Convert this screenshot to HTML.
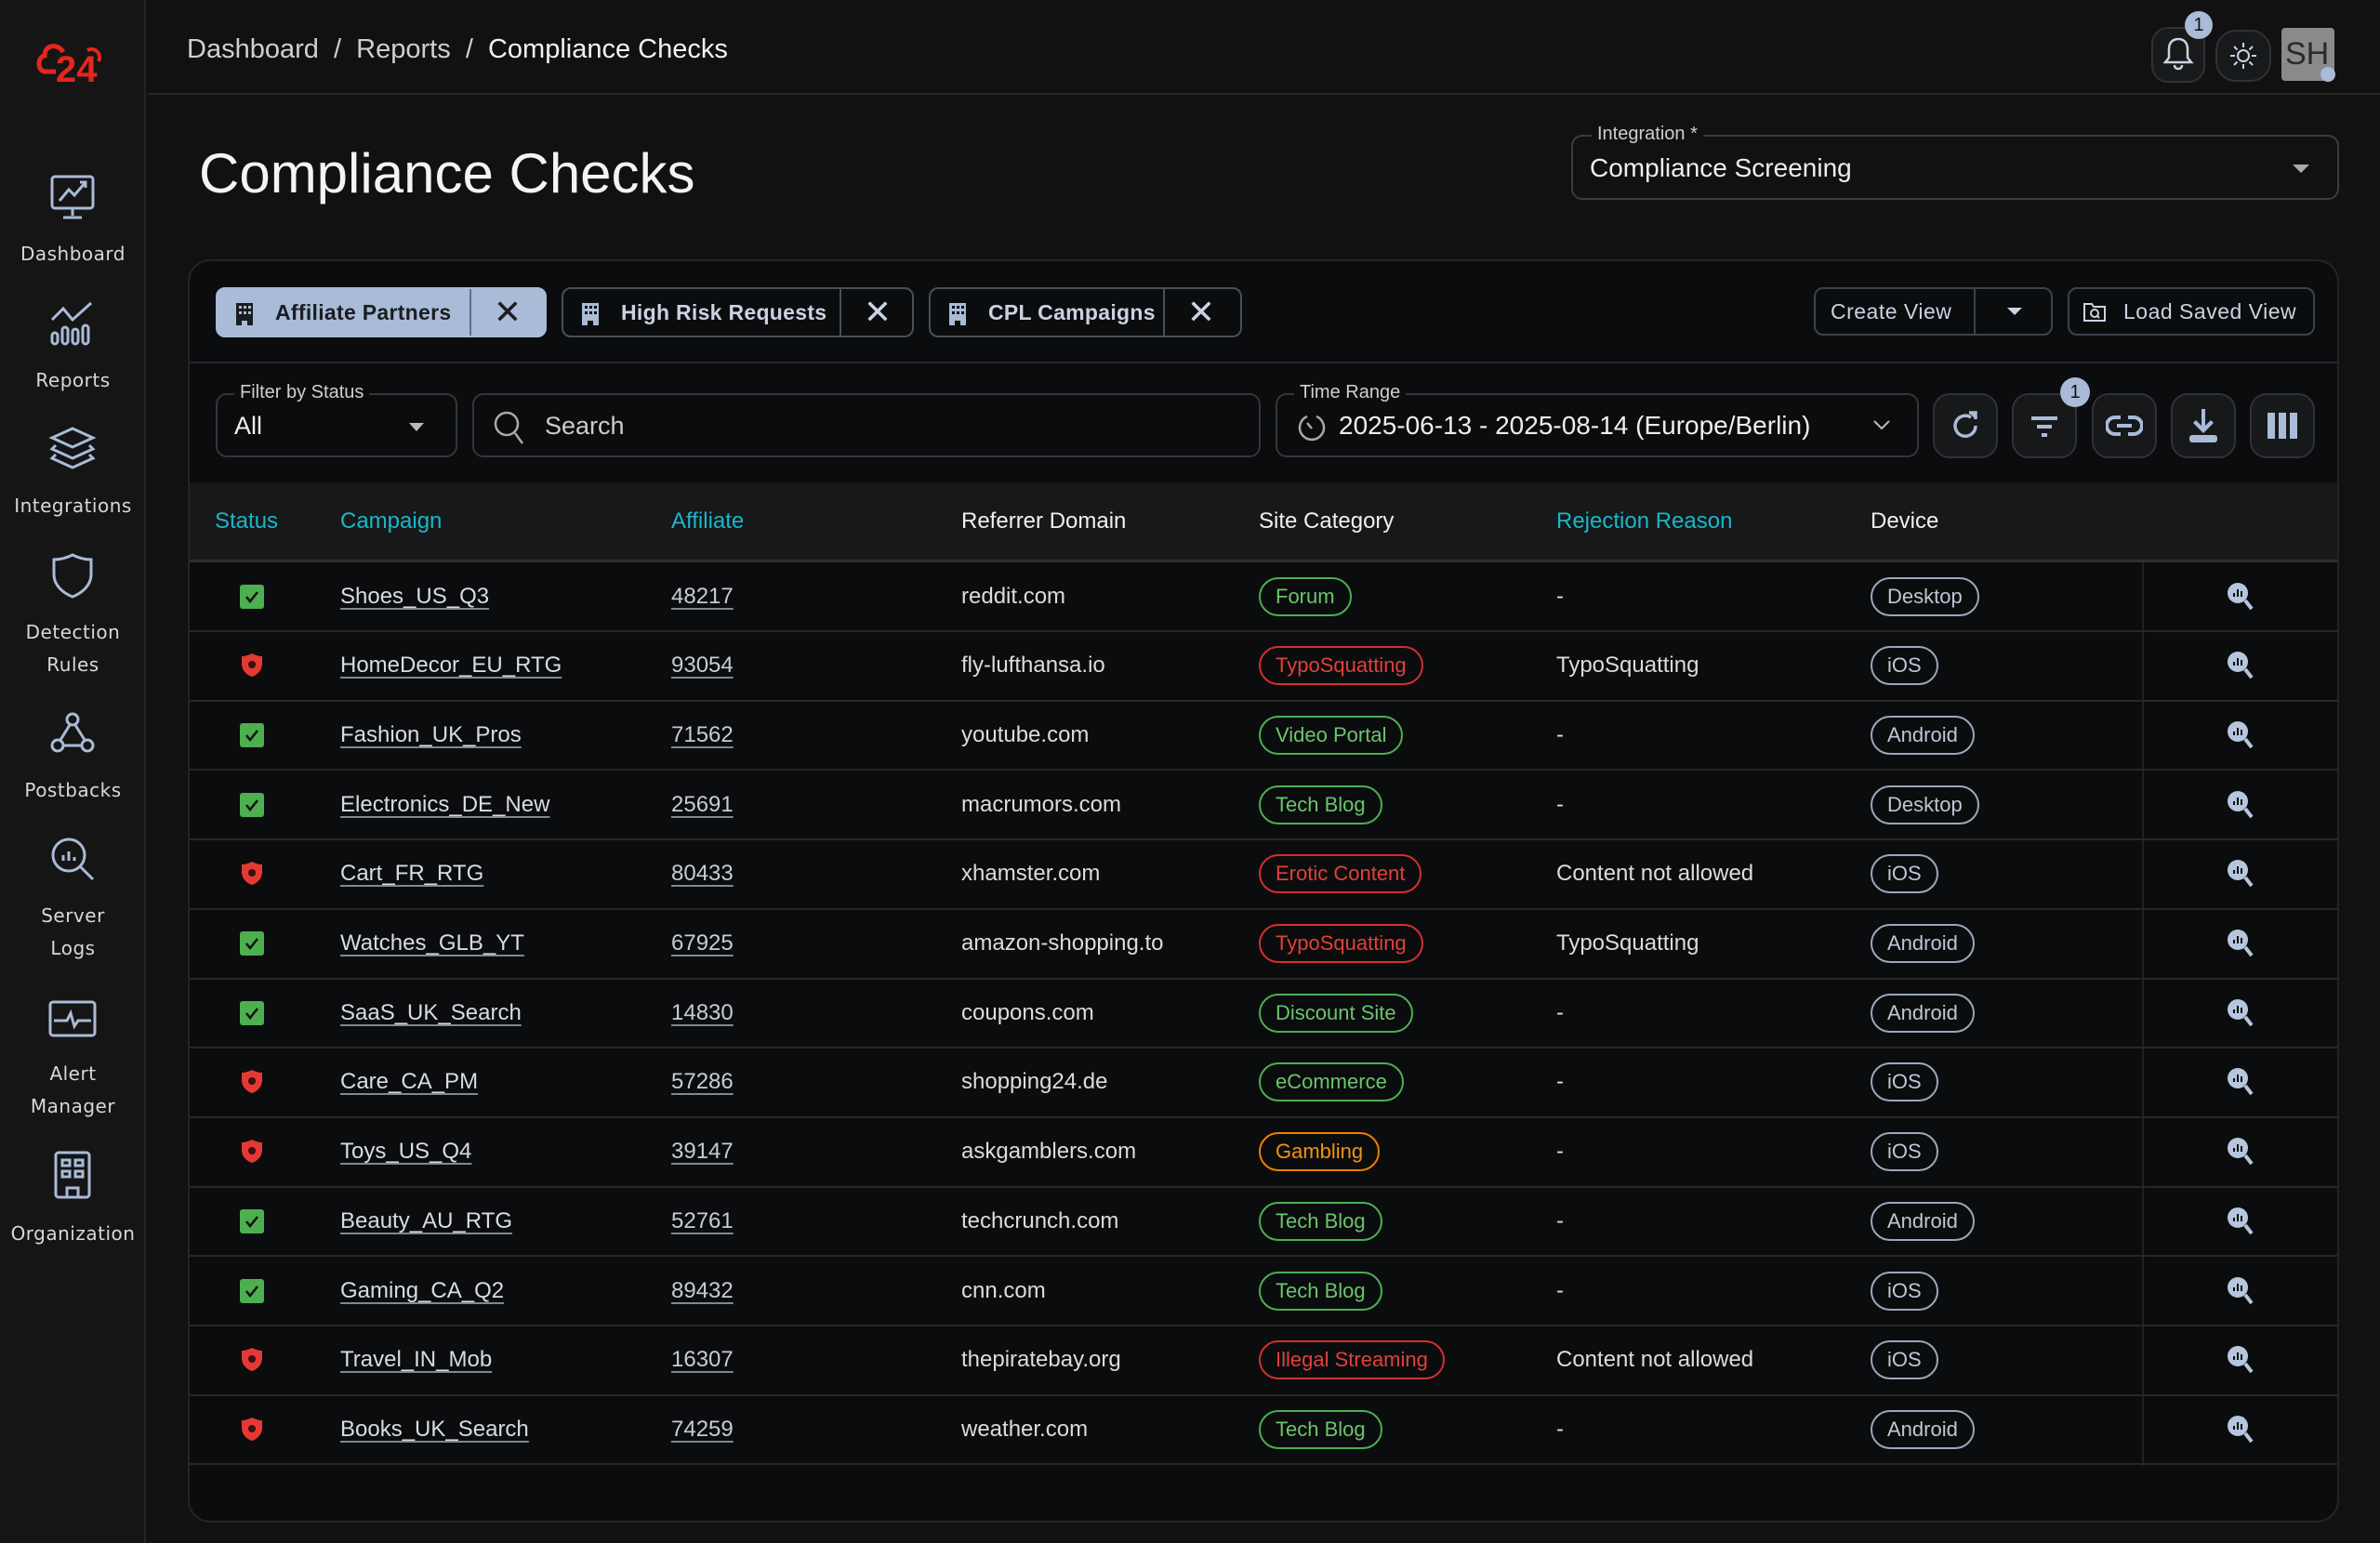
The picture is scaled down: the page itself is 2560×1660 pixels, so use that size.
<!DOCTYPE html>
<html><head><meta charset="utf-8"><style>
*{box-sizing:border-box;margin:0;padding:0}
body{width:2560px;height:1660px;background:#111112;font-family:"Liberation Sans",sans-serif;color:#e6e6e6;position:relative;overflow:hidden}
.abs{position:absolute}
#side{left:0;top:0;width:157px;height:1660px;background:#151515;border-right:2px solid #232323}
.nl{position:absolute;left:0;width:157px;text-align:center;font-family:"DejaVu Sans",sans-serif;font-size:20px;color:#d8d8d8;line-height:35px;letter-spacing:0.5px}
.ni{position:absolute;left:50px;width:56px;height:56px}
#hdr{left:159px;top:0;right:0;height:102px;border-bottom:2px solid #262626}
.bc{left:201px;top:37px;font-size:29px;color:#cfcfcf}
h1{position:absolute;left:214px;top:152px;font-size:60px;font-weight:normal;color:#f4f4f4}
.fld{position:absolute;border:2px solid #3a3c3f;border-radius:12px}
.lbl{position:absolute;top:-14px;background:#111112;padding:0 6px;font-size:20px;color:#cfcfcf}
#card{left:202px;top:279px;width:2314px;height:1359px;background:#0b0c0d;border:2px solid #222426;border-radius:24px;overflow:hidden}
.chip{position:absolute;top:28px;height:54px;border:2px solid #4a5058;border-radius:10px;font-size:23px;color:#c9d3e2;display:flex;align-items:center;font-weight:bold}
.chip .t{padding-left:62px;letter-spacing:0.3px}
.chip .x{position:absolute;top:0;bottom:0;border-left:2px solid #4a5058;width:80px;display:flex;align-items:center;justify-content:center;font-size:36px;font-weight:normal}
.btn{position:absolute;top:28px;height:52px;border:2px solid #3d434b;border-radius:10px;font-size:23px;color:#c9d3e2;display:flex;align-items:center;letter-spacing:0.5px}
.ib{position:absolute;top:142px;width:70px;height:70px;border:2px solid #2f3236;border-radius:18px;background:#16181a;display:flex;align-items:center;justify-content:center}
#th{position:absolute;left:0;top:238px;width:2314px;height:86px;background:#161819;border-bottom:3px solid #2e3032}
.h{position:absolute;top:28px;font-size:24px;color:#f0f0f0}
.h.c{color:#1ab7c9}
.row{position:absolute;left:0;width:2314px;height:75px;border-bottom:2px solid #26282a;font-size:24px;color:#dcdcdc}
.row>div{position:absolute;top:0;height:73px;display:flex;align-items:center}
.st{left:54px;width:26px}
.cp{left:162px;text-decoration:underline;text-underline-offset:5px;text-decoration-color:#7f8894;color:#d8dce2}
.af{left:518px;text-decoration:underline;text-underline-offset:5px;text-decoration-color:#7f8894;color:#c8ccd2}
.rf{left:830px}
.sc{left:1150px}
.rj{left:1470px}
.dv{left:1808px}
.ac{left:2191px;width:30px}
.vd{position:absolute;left:2100px;top:0;bottom:0;width:2px;background:#1f2123}
.b{height:42px;border:2px solid;border-radius:21px;padding:0 16px;font-size:22px;display:flex;align-items:center}
.g{border-color:#4caf50;color:#6cc46c}
.r{border-color:#d32f2f;color:#e2403a}
.o{border-color:#f57c00;color:#f5920f}
.d{border-color:#9aa8bd;color:#bdc7d6}
</style></head><body>

<div id="side" class="abs">
  <svg class="abs" style="left:38px;top:44px" width="80" height="50" viewBox="0 0 80 50"><path d="M30 12 C24 2 10 4 10 16 C2 17 2 32 10 33 L22 33" fill="none" stroke="#e3261f" stroke-width="5"/><path d="M56 10 C64 6 72 14 68 22" fill="none" stroke="#e3261f" stroke-width="4"/><text x="22" y="44" font-family="Liberation Sans" font-weight="bold" font-size="40" fill="#e3261f">24</text></svg>
  <svg class="ni" style="top:184px" viewBox="0 0 56 56" fill="none" stroke="#a9bbd6" stroke-width="3"><rect x="6" y="6" width="44" height="34" rx="3"/><path d="M14 32l10-12 6 6 12-14M36 12h6v6M28 40v8M18 50h20"/></svg>
  <div class="nl" style="top:256px">Dashboard</div>
  <svg class="ni" style="top:320px" viewBox="0 0 56 56" fill="none" stroke="#a9bbd6" stroke-width="3"><path d="M6 24L18 12l10 12 20-18"/><rect x="6" y="38" width="6" height="12" rx="3"/><rect x="17" y="32" width="6" height="18" rx="3"/><rect x="28" y="34" width="6" height="16" rx="3"/><rect x="39" y="30" width="6" height="20" rx="3"/></svg>
  <div class="nl" style="top:392px">Reports</div>
  <svg class="ni" style="top:455px" viewBox="0 0 56 56" fill="none" stroke="#a9bbd6" stroke-width="3"><path d="M28 6l22 10-22 10L6 16z"/><path d="M10 24l-4 4 22 10 22-10-4-4"/><path d="M10 34l-4 4 22 10 22-10-4-4"/></svg>
  <div class="nl" style="top:527px">Integrations</div>
  <svg class="ni" style="top:591px" viewBox="0 0 56 56" fill="none" stroke="#a9bbd6" stroke-width="3"><path d="M28 6C20 10 14 11 8 11v16c0 12 10 20 20 24 10-4 20-12 20-24V11c-6 0-12-1-20-5z"/></svg>
  <div class="nl" style="top:663px">Detection<br>Rules</div>
  <svg class="ni" style="top:762px" viewBox="0 0 56 56" fill="none" stroke="#a9bbd6" stroke-width="3"><circle cx="28" cy="12" r="6"/><circle cx="12" cy="40" r="6"/><circle cx="44" cy="40" r="6"/><path d="M25 18l-10 16M31 18l10 16M18 40h20"/></svg>
  <div class="nl" style="top:833px">Postbacks</div>
  <svg class="ni" style="top:896px" viewBox="0 0 56 56" fill="none" stroke="#a9bbd6" stroke-width="3"><circle cx="24" cy="24" r="17"/><path d="M36 36l14 14M18 30v-6M24 30v-10M30 30v-4"/></svg>
  <div class="nl" style="top:968px">Server<br>Logs</div>
  <svg class="ni" style="top:1068px" viewBox="0 0 56 56" fill="none" stroke="#a9bbd6" stroke-width="3"><rect x="4" y="10" width="48" height="36" rx="3"/><path d="M8 30h14l4-8 4 14 4-6h14"/></svg>
  <div class="nl" style="top:1138px">Alert<br>Manager</div>
  <svg class="ni" style="top:1236px" viewBox="0 0 56 56" fill="none" stroke="#a9bbd6" stroke-width="3"><rect x="10" y="4" width="36" height="48" rx="3"/><rect x="17" y="12" width="8" height="6"/><rect x="31" y="12" width="8" height="6"/><rect x="17" y="24" width="8" height="6"/><rect x="31" y="24" width="8" height="6"/><path d="M22 52V42h12v10"/></svg>
  <div class="nl" style="top:1310px">Organization</div>
</div>

<div id="hdr" class="abs"></div>
<div class="abs bc">Dashboard&nbsp;&nbsp;/&nbsp;&nbsp;Reports&nbsp;&nbsp;/&nbsp;&nbsp;<span style="color:#f2f2f2">Compliance Checks</span></div>
<div class="abs" style="left:2314px;top:29px;width:58px;height:60px;border:2px solid #2f3236;border-radius:18px;background:#17191b"></div>
<svg class="abs" style="left:2325px;top:38px" width="36" height="40" viewBox="0 0 36 40" fill="none" stroke="#c9d3e2" stroke-width="2.5"><path d="M18 4c-7 0-10 5-10 11v9l-4 5h28l-4-5v-9c0-6-3-11-10-11zM14 32c0 3 2 4 4 4s4-1 4-4"/></svg>
<div class="abs" style="left:2350px;top:12px;width:30px;height:30px;border-radius:15px;background:#a9bbd6;color:#111;font-size:20px;text-align:center;line-height:30px">1</div>
<div class="abs" style="left:2383px;top:32px;width:60px;height:56px;border:2px solid #2f3236;border-radius:22px;background:#17191b"></div>
<svg class="abs" style="left:2397px;top:44px" width="32" height="32" viewBox="0 0 32 32" fill="none" stroke="#c9d3e2" stroke-width="2"><circle cx="16" cy="16" r="6"/><path d="M16 2v5M16 25v5M2 16h5M25 16h5M6 6l3.5 3.5M22.5 22.5L26 26M6 26l3.5-3.5M22.5 9.5L26 6"/></svg>
<div class="abs" style="left:2454px;top:30px;width:57px;height:57px;background:#8a8a8a;border-radius:4px;color:#2a2a2a;font-size:34px;line-height:57px;padding-left:4px">SH</div>
<div class="abs" style="left:2496px;top:72px;width:16px;height:16px;border-radius:8px;background:#a9bbd6"></div>

<h1>Compliance Checks</h1>
<div class="fld" style="left:1690px;top:145px;width:826px;height:70px">
  <div class="lbl" style="left:20px">Integration *</div>
  <div class="abs" style="left:18px;top:18px;font-size:28px;color:#eee">Compliance Screening</div>
  <div class="abs" style="right:30px;top:30px;width:0;height:0;border-left:9px solid transparent;border-right:9px solid transparent;border-top:9px solid #aaa"></div>
</div>

<div id="card" class="abs">
  <div class="chip" style="left:28px;width:356px;background:#a9bbd6;border-color:#a9bbd6;color:#1a1d22">
    <svg class="abs" style="left:18px;top:13px" width="22" height="28" viewBox="0 0 22 28"><path d="M2 2h18v24h-6v-5h-6v5H2z" fill="#1a1d22"/><g fill="#a9bbd6"><rect x="5" y="5" width="3" height="3"/><rect x="10" y="5" width="3" height="3"/><rect x="15" y="5" width="3" height="3"/><rect x="5" y="11" width="3" height="3"/><rect x="10" y="11" width="3" height="3"/><rect x="15" y="11" width="3" height="3"/></g></svg>
    <span class="t">Affiliate Partners</span><div class="x" style="left:271px;border-color:#5d6f8c;color:#1a1d22">✕</div></div>
  <div class="chip" style="left:400px;width:379px">
    <svg class="abs" style="left:18px;top:13px" width="22" height="28" viewBox="0 0 22 28"><path d="M2 2h18v24h-6v-5h-6v5H2z" fill="#a9bbd6"/><g fill="#0b0c0d"><rect x="5" y="5" width="3" height="3"/><rect x="10" y="5" width="3" height="3"/><rect x="15" y="5" width="3" height="3"/><rect x="5" y="11" width="3" height="3"/><rect x="10" y="11" width="3" height="3"/><rect x="15" y="11" width="3" height="3"/></g></svg>
    <span class="t">High Risk Requests</span><div class="x" style="left:297px;color:#c9d3e2">✕</div></div>
  <div class="chip" style="left:795px;width:337px">
    <svg class="abs" style="left:18px;top:13px" width="22" height="28" viewBox="0 0 22 28"><path d="M2 2h18v24h-6v-5h-6v5H2z" fill="#a9bbd6"/><g fill="#0b0c0d"><rect x="5" y="5" width="3" height="3"/><rect x="10" y="5" width="3" height="3"/><rect x="15" y="5" width="3" height="3"/><rect x="5" y="11" width="3" height="3"/><rect x="10" y="11" width="3" height="3"/><rect x="15" y="11" width="3" height="3"/></g></svg>
    <span class="t">CPL Campaigns</span><div class="x" style="left:250px;color:#c9d3e2">✕</div></div>

  <div class="btn" style="left:1747px;width:257px"><span style="padding-left:16px">Create View</span>
    <div class="abs" style="left:170px;top:0;bottom:0;border-left:2px solid #3d434b;width:85px"><div class="abs" style="left:34px;top:20px;border-left:8px solid transparent;border-right:8px solid transparent;border-top:8px solid #c9d3e2"></div></div></div>
  <div class="btn" style="left:2020px;width:266px">
    <svg class="abs" style="left:14px;top:12px" width="26" height="24" viewBox="0 0 26 24" fill="none" stroke="#c9d3e2" stroke-width="2"><path d="M2 4h8l2 3h12v15H2z"/><circle cx="13" cy="14" r="4"/><path d="M16 17l2 2"/></svg>
    <span style="padding-left:58px">Load Saved View</span></div>

  <div class="abs" style="left:0;top:108px;width:2314px;height:2px;background:#242628"></div>

  <div class="fld" style="left:28px;top:142px;width:260px;height:69px;border-color:#34363a">
    <div class="lbl" style="left:18px;background:#0b0c0d">Filter by Status</div>
    <div class="abs" style="left:18px;top:18px;font-size:27px;color:#eee">All</div>
    <div class="abs" style="left:206px;top:30px;border-left:8px solid transparent;border-right:8px solid transparent;border-top:9px solid #bbb"></div>
  </div>
  <div class="fld" style="left:304px;top:142px;width:848px;height:69px;border-color:#34363a">
    <svg class="abs" style="left:20px;top:16px" width="38" height="40" viewBox="0 0 38 40" fill="none" stroke="#aaa" stroke-width="2.5"><circle cx="15" cy="15" r="12"/><path d="M24 25l8 11"/></svg>
    <div class="abs" style="left:76px;top:18px;font-size:27px;color:#ccc">Search</div>
  </div>
  <div class="fld" style="left:1168px;top:142px;width:692px;height:69px;border-color:#34363a">
    <div class="lbl" style="left:18px;background:#0b0c0d">Time Range</div>
    <svg class="abs" style="left:20px;top:18px" width="34" height="34" viewBox="0 0 34 34" fill="none" stroke="#aaa" stroke-width="2.5"><path d="M12 5A13 13 0 1 0 22 5"/><path d="M12 12l5 6"/></svg>
    <div class="abs" style="left:66px;top:17px;font-size:28px;color:#eee">2025-06-13 - 2025-08-14 (Europe/Berlin)</div>
    <svg class="abs" style="left:640px;top:26px" width="20" height="14" viewBox="0 0 20 14" fill="none" stroke="#bbb" stroke-width="2"><path d="M2 2l8 8 8-8"/></svg>
  </div>
  <div class="ib" style="left:1875px"><svg width="36" height="36" viewBox="0 0 36 36" fill="none" stroke="#a9bbd6" stroke-width="3.5"><path d="M29 18A11 11 0 1 1 24 9"/><path d="M22 4h7v7" fill="#a9bbd6"/></svg></div>
  <div class="ib" style="left:1960px"><svg width="34" height="30" viewBox="0 0 34 30" fill="#a9bbd6"><rect x="3" y="5" width="28" height="4"/><rect x="9" y="14" width="16" height="4"/><rect x="14" y="23" width="6" height="4"/></svg></div>
  <div class="abs" style="left:2012px;top:125px;width:32px;height:32px;border-radius:16px;background:#a9bbd6;color:#111;font-size:20px;text-align:center;line-height:32px">1</div>
  <div class="ib" style="left:2046px"><svg width="40" height="26" viewBox="0 0 40 26" fill="none" stroke="#a9bbd6" stroke-width="4"><path d="M16 4H10a9 9 0 0 0 0 18h6M24 4h6a9 9 0 0 1 0 18h-6M12 13h16"/></svg></div>
  <div class="ib" style="left:2131px"><svg width="36" height="40" viewBox="0 0 36 40" fill="#a9bbd6"><path d="M16 2h4v18l6-6 3 3-11 11L7 17l3-3 6 6z"/><rect x="3" y="30" width="30" height="8" rx="3"/></svg></div>
  <div class="ib" style="left:2216px"><svg width="32" height="28" viewBox="0 0 32 28" fill="#a9bbd6"><rect x="0" y="0" width="8" height="28"/><rect x="12" y="0" width="8" height="28"/><rect x="24" y="0" width="8" height="28"/></svg></div>

  <div id="th">
    <div class="h c" style="left:27px">Status</div>
    <div class="h c" style="left:162px">Campaign</div>
    <div class="h c" style="left:518px">Affiliate</div>
    <div class="h" style="left:830px">Referrer Domain</div>
    <div class="h" style="left:1150px">Site Category</div>
    <div class="h c" style="left:1470px">Rejection Reason</div>
    <div class="h" style="left:1808px">Device</div>
  </div>
  <div class="abs" style="left:0;top:324px;width:2314px;height:972px">
    <div class="vd"></div>
    <svg width="0" height="0" style="position:absolute"><defs>
      <g id="ok"><rect x="0" y="0" width="26" height="26" rx="3" fill="#4caf50"/><path d="M7 13l4 5 8-10" fill="none" stroke="#111" stroke-width="2.5"/></g>
      <g id="bad"><path d="M13 1C9 3 5 4 2 4v8c0 7 5 12 11 14 6-2 11-7 11-14V4c-3 0-7-1-11-3z" fill="#e53935"/><circle cx="13" cy="13" r="4" fill="#3a1010"/></g>
      <g id="mg"><circle cx="12" cy="12" r="11" fill="#b5c6de"/><path d="M8 16v-4M12 16V8M16 16v-6" stroke="#0b0c0d" stroke-width="2"/><path d="M20 20l7 9" stroke="#b5c6de" stroke-width="4"/></g>
    </defs></svg>

    <div class="row" style="top:0"><div class="st"><svg width="26" height="26"><use href="#ok"/></svg></div><div class="cp">Shoes_US_Q3</div><div class="af">48217</div><div class="rf">reddit.com</div><div class="sc"><span class="b g">Forum</span></div><div class="rj">-</div><div class="dv"><span class="b d">Desktop</span></div><div class="ac"><svg width="30" height="32"><use href="#mg"/></svg></div></div>
    <div class="row" style="top:74.7px"><div class="st"><svg width="26" height="28"><use href="#bad"/></svg></div><div class="cp">HomeDecor_EU_RTG</div><div class="af">93054</div><div class="rf">fly-lufthansa.io</div><div class="sc"><span class="b r">TypoSquatting</span></div><div class="rj">TypoSquatting</div><div class="dv"><span class="b d">iOS</span></div><div class="ac"><svg width="30" height="32"><use href="#mg"/></svg></div></div>
    <div class="row" style="top:149.4px"><div class="st"><svg width="26" height="26"><use href="#ok"/></svg></div><div class="cp">Fashion_UK_Pros</div><div class="af">71562</div><div class="rf">youtube.com</div><div class="sc"><span class="b g">Video Portal</span></div><div class="rj">-</div><div class="dv"><span class="b d">Android</span></div><div class="ac"><svg width="30" height="32"><use href="#mg"/></svg></div></div>
    <div class="row" style="top:224.1px"><div class="st"><svg width="26" height="26"><use href="#ok"/></svg></div><div class="cp">Electronics_DE_New</div><div class="af">25691</div><div class="rf">macrumors.com</div><div class="sc"><span class="b g">Tech Blog</span></div><div class="rj">-</div><div class="dv"><span class="b d">Desktop</span></div><div class="ac"><svg width="30" height="32"><use href="#mg"/></svg></div></div>
    <div class="row" style="top:298.8px"><div class="st"><svg width="26" height="28"><use href="#bad"/></svg></div><div class="cp">Cart_FR_RTG</div><div class="af">80433</div><div class="rf">xhamster.com</div><div class="sc"><span class="b r">Erotic Content</span></div><div class="rj">Content not allowed</div><div class="dv"><span class="b d">iOS</span></div><div class="ac"><svg width="30" height="32"><use href="#mg"/></svg></div></div>
    <div class="row" style="top:373.5px"><div class="st"><svg width="26" height="26"><use href="#ok"/></svg></div><div class="cp">Watches_GLB_YT</div><div class="af">67925</div><div class="rf">amazon-shopping.to</div><div class="sc"><span class="b r">TypoSquatting</span></div><div class="rj">TypoSquatting</div><div class="dv"><span class="b d">Android</span></div><div class="ac"><svg width="30" height="32"><use href="#mg"/></svg></div></div>
    <div class="row" style="top:448.2px"><div class="st"><svg width="26" height="26"><use href="#ok"/></svg></div><div class="cp">SaaS_UK_Search</div><div class="af">14830</div><div class="rf">coupons.com</div><div class="sc"><span class="b g">Discount Site</span></div><div class="rj">-</div><div class="dv"><span class="b d">Android</span></div><div class="ac"><svg width="30" height="32"><use href="#mg"/></svg></div></div>
    <div class="row" style="top:522.9px"><div class="st"><svg width="26" height="28"><use href="#bad"/></svg></div><div class="cp">Care_CA_PM</div><div class="af">57286</div><div class="rf">shopping24.de</div><div class="sc"><span class="b g">eCommerce</span></div><div class="rj">-</div><div class="dv"><span class="b d">iOS</span></div><div class="ac"><svg width="30" height="32"><use href="#mg"/></svg></div></div>
    <div class="row" style="top:597.6px"><div class="st"><svg width="26" height="28"><use href="#bad"/></svg></div><div class="cp">Toys_US_Q4</div><div class="af">39147</div><div class="rf">askgamblers.com</div><div class="sc"><span class="b o">Gambling</span></div><div class="rj">-</div><div class="dv"><span class="b d">iOS</span></div><div class="ac"><svg width="30" height="32"><use href="#mg"/></svg></div></div>
    <div class="row" style="top:672.3px"><div class="st"><svg width="26" height="26"><use href="#ok"/></svg></div><div class="cp">Beauty_AU_RTG</div><div class="af">52761</div><div class="rf">techcrunch.com</div><div class="sc"><span class="b g">Tech Blog</span></div><div class="rj">-</div><div class="dv"><span class="b d">Android</span></div><div class="ac"><svg width="30" height="32"><use href="#mg"/></svg></div></div>
    <div class="row" style="top:747px"><div class="st"><svg width="26" height="26"><use href="#ok"/></svg></div><div class="cp">Gaming_CA_Q2</div><div class="af">89432</div><div class="rf">cnn.com</div><div class="sc"><span class="b g">Tech Blog</span></div><div class="rj">-</div><div class="dv"><span class="b d">iOS</span></div><div class="ac"><svg width="30" height="32"><use href="#mg"/></svg></div></div>
    <div class="row" style="top:821.7px"><div class="st"><svg width="26" height="28"><use href="#bad"/></svg></div><div class="cp">Travel_IN_Mob</div><div class="af">16307</div><div class="rf">thepiratebay.org</div><div class="sc"><span class="b r">Illegal Streaming</span></div><div class="rj">Content not allowed</div><div class="dv"><span class="b d">iOS</span></div><div class="ac"><svg width="30" height="32"><use href="#mg"/></svg></div></div>
    <div class="row" style="top:896.4px"><div class="st"><svg width="26" height="28"><use href="#bad"/></svg></div><div class="cp">Books_UK_Search</div><div class="af">74259</div><div class="rf">weather.com</div><div class="sc"><span class="b g">Tech Blog</span></div><div class="rj">-</div><div class="dv"><span class="b d">Android</span></div><div class="ac"><svg width="30" height="32"><use href="#mg"/></svg></div></div>
  </div>
</div>
</body></html>
